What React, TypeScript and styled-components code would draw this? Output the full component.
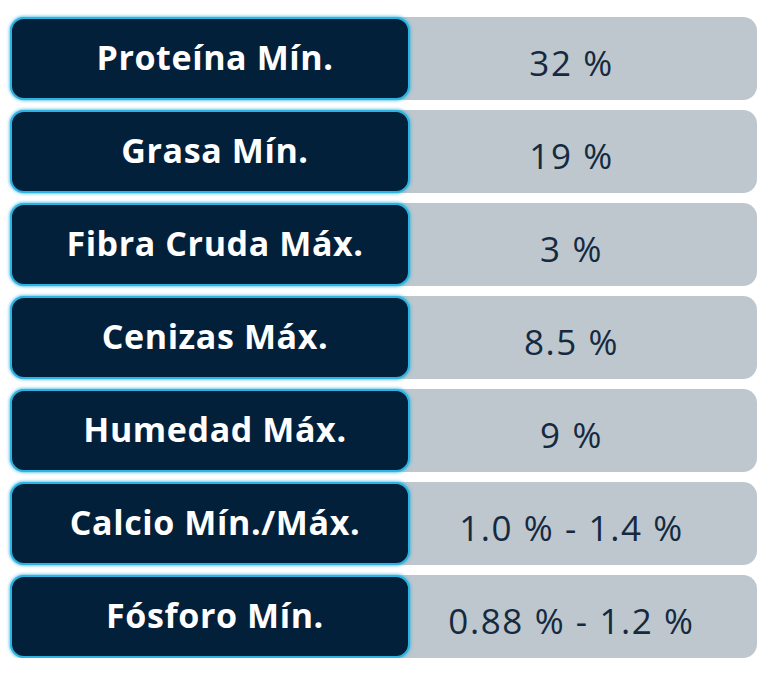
import React from "react";
import styled, { createGlobalStyle } from "styled-components";

const GlobalStyle = createGlobalStyle`
  html, body {
    margin: 0;
    padding: 0;
    background: #ffffff;
  }
  body {
    font-family: "Open Sans", "Noto Sans", sans-serif;
  }
`;

const Table = styled.div`
  display: flex;
  flex-direction: column;
  gap: 10px;
  width: 747px;
  padding: 17px 0 0 10px;
`;

const Row = styled.div`
  display: grid;
  grid-template-columns: 400px 1fr;
  height: 83px;
  background: #bdc7cd;
  border-radius: 14px;
`;

const Label = styled.div`
  display: flex;
  align-items: center;
  justify-content: center;
  box-sizing: border-box;
  padding: 0 0 4px 10px;
  background: #03203a;
  border: 2px solid #2cb3e2;
  border-radius: 14px;
  box-shadow: 0 0 3px 1px rgba(44, 179, 226, 0.7);
  color: #ffffff;
  font-size: 34px;
  font-weight: 700;
  letter-spacing: 0.6px;
  white-space: nowrap;
`;

const Value = styled.div`
  display: flex;
  align-items: center;
  justify-content: center;
  padding: 8px 24px 0 0;
  color: #152a40;
  font-size: 35px;
  font-weight: 500;
  letter-spacing: 1.6px;
  white-space: nowrap;
`;

const rows = [
  { label: "Proteína Mín.", value: "32 %" },
  { label: "Grasa Mín.", value: "19 %" },
  { label: "Fibra Cruda Máx.", value: "3 %" },
  { label: "Cenizas Máx.", value: "8.5 %" },
  { label: "Humedad Máx.", value: "9 %" },
  { label: "Calcio Mín./Máx.", value: "1.0 % - 1.4 %" },
  { label: "Fósforo Mín.", value: "0.88 % - 1.2 %" },
];

export default function App() {
  return (
    <>
      <GlobalStyle />
      <Table>
        {rows.map((r) => (
          <Row key={r.label}>
            <Label>{r.label}</Label>
            <Value>{r.value}</Value>
          </Row>
        ))}
      </Table>
    </>
  );
}
